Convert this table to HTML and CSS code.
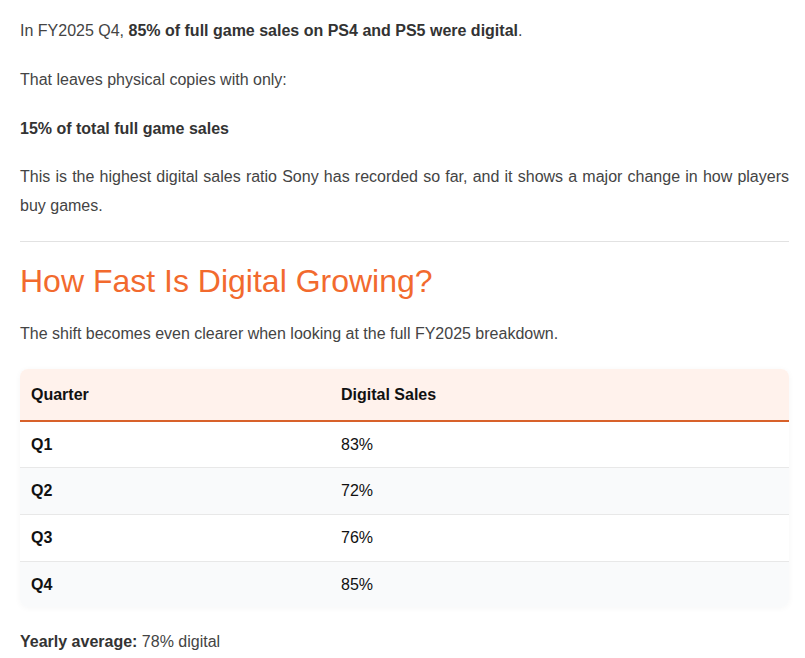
FILE: index.html
```html
<!DOCTYPE html>
<html lang="en">
<head>
<meta charset="utf-8">
<title>Digital sales</title>
<link rel="stylesheet" href="styles.css">
</head>
<body>
<article class="article">
  <p>In FY2025 Q4, <strong>85% of full game sales on PS4 and PS5 were digital</strong>.</p>
  <p>That leaves physical copies with only:</p>
  <p><strong>15% of total full game sales</strong></p>
  <p>This is the highest digital sales ratio Sony has recorded so far, and it shows a major change in how players buy games.</p>
  <hr class="divider">
  <h2 class="heading">How Fast Is Digital Growing?</h2>
  <p class="lead">The shift becomes even clearer when looking at the full FY2025 breakdown.</p>
  <table class="data">
    <thead>
      <tr><th class="col-q">Quarter</th><th>Digital Sales</th></tr>
    </thead>
    <tbody>
      <tr><td class="q">Q1</td><td>83%</td></tr>
      <tr><td class="q">Q2</td><td>72%</td></tr>
      <tr><td class="q">Q3</td><td>76%</td></tr>
      <tr><td class="q">Q4</td><td>85%</td></tr>
    </tbody>
  </table>
  <p class="avg"><strong>Yearly average:</strong> 78% digital</p>
</article>
</body>
</html>
```
FILE: styles.css
```css
html, body {
  margin: 0;
  padding: 0;
  background: #ffffff;
}
body {
  font-family: "Liberation Sans", Arial, sans-serif;
  font-size: 16px;
  color: #444444;
}
.article {
  width: 769px;
  margin-left: 20px;
  padding-top: 17px;
}
.article p {
  margin: 0 0 20px 0;
  line-height: 28.8px;
  text-align: justify;
}
.article strong {
  font-weight: 700;
  color: #333333;
}
.divider {
  border: 0;
  border-top: 1px solid #e2e2e2;
  margin: 0 0 20px 0;
  height: 0;
}
.heading {
  font-size: 32px;
  font-weight: 400;
  line-height: 38px;
  color: #f26a2e;
  margin: 0 0 20px 0;
}
.article p.lead {
  margin-bottom: 20px;
}
.data {
  width: 100%;
  border-collapse: separate;
  border-spacing: 0;
  border-radius: 8px;
  overflow: hidden;
  box-shadow: 0 1px 6px rgba(0, 0, 0, 0.04);
  margin-bottom: 21px;
  color: #111111;
}
.data th {
  background: #fff2ec;
  text-align: left;
  font-weight: 700;
  padding: 14px 11px;
  line-height: 23px;
  border-bottom: 2px solid #d8612a;
}
.data th.col-q {
  width: 288px;
}
.data td {
  padding: 12px 11px;
  line-height: 21.6px;
  border-bottom: 1px solid #e8e8e8;
}
.data tbody tr:nth-child(even) td {
  background: #f9fafb;
}
.data tbody tr:last-child td {
  border-bottom: 0;
}
.data td.q {
  font-weight: 700;
}
```
